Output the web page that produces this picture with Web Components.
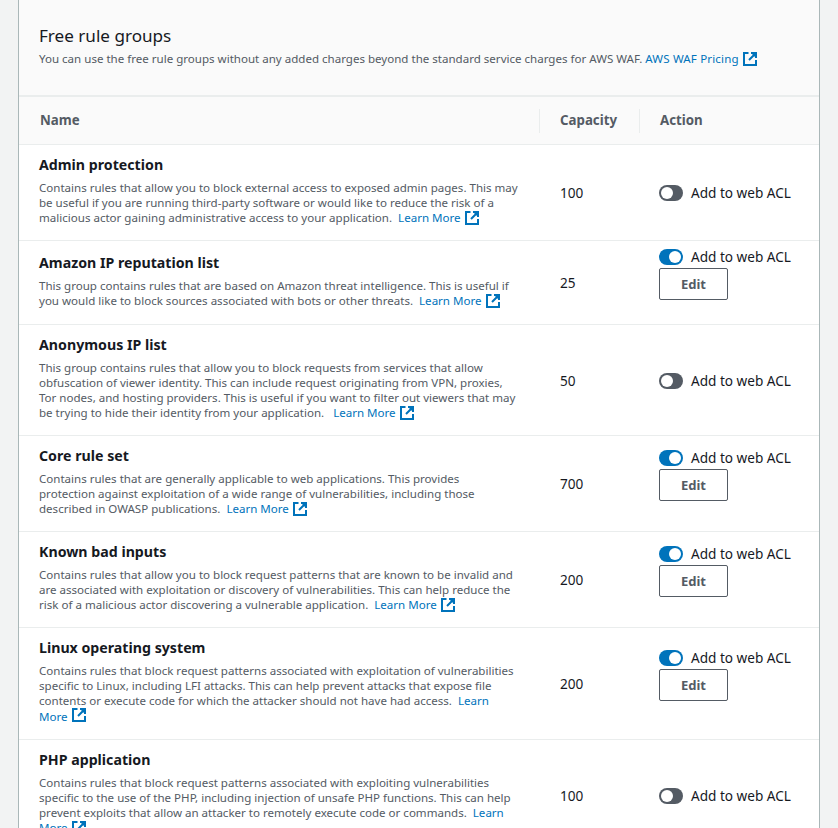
<!DOCTYPE html>
<html>
<head>
<meta charset="utf-8">
<title>Free rule groups</title>
<style>
  html, body { margin: 0; height: 828px; overflow: hidden; background: #f2f3f3; }
  body { font-family: "Noto Sans", sans-serif; color: #16191f; }
</style>
</head>
<body>
<rule-panel>
  <span slot="title">Free rule groups</span>
  <span slot="desc">You can use the free rule groups without any added charges beyond the standard service charges for AWS WAF. <ext-link style="letter-spacing:.15px;margin-left:0">AWS WAF Pricing</ext-link></span>

  <rule-row name="Admin protection" capacity="100">Contains rules that allow you to block external access to exposed admin pages. This may be useful if you are running third-party software or would like to reduce the risk of a malicious actor gaining administrative access to your application. <ext-link>Learn More</ext-link></rule-row>
  <rule-row name="Amazon IP reputation list" capacity="25" on>This group contains rules that are based on Amazon threat intelligence. This is useful if you would like to block sources associated with bots or other threats. <ext-link>Learn More</ext-link></rule-row>
  <rule-row name="Anonymous IP list" capacity="50">This group contains rules that allow you to block requests from services that allow obfuscation of viewer identity. This can include request originating from VPN, proxies, Tor nodes, and hosting providers. This is useful if you want to filter out viewers that may be trying to hide their identity from your application. <ext-link style="margin-left:6px">Learn More</ext-link></rule-row>
  <rule-row name="Core rule set" capacity="700" on>Contains rules that are generally applicable to web applications. This provides protection against exploitation of a wide range of vulnerabilities, including those described in OWASP publications. <ext-link>Learn More</ext-link></rule-row>
  <rule-row name="Known bad inputs" capacity="200" on>Contains rules that allow you to block request patterns that are known to be invalid and are associated with exploitation or discovery of vulnerabilities. This can help reduce the risk of a malicious actor discovering a vulnerable application. <ext-link>Learn More</ext-link></rule-row>
  <rule-row name="Linux operating system" capacity="200" on>Contains rules that block request patterns associated with exploitation of vulnerabilities specific to Linux, including LFI attacks. This can help prevent attacks that expose file contents or execute code for which the attacker should not have had access. <ext-link tall>Learn More</ext-link></rule-row>
  <rule-row name="PHP application" capacity="100">Contains rules that block request patterns associated with exploiting vulnerabilities specific to the use of the PHP, including injection of unsafe PHP functions. This can help prevent exploits that allow an attacker to remotely execute code or commands. <ext-link>Learn More</ext-link></rule-row>
</rule-panel>

<script>
class ExtLink extends HTMLElement {
  constructor() {
    super();
    this.attachShadow({ mode: "open" });
  }
  connectedCallback() {
    this.shadowRoot.innerHTML = `
      <style>
        :host { display: inline; color: #0073bb; margin-left: 3px; }
        svg { width: 14px; height: 14px; vertical-align: -3px; margin-left: 1px; }
        :host([tall]) svg { vertical-align: -1px; }
      </style>
      <slot></slot> <svg viewBox="0 0 14 14" fill="none" stroke="#0073bb" stroke-width="2">
        <path d="M5.5 1H1v12h12V8"/>
        <path d="M8 1h5v5M13 1L6 8"/>
        <path d="M9 2h3v3z" fill="#0073bb" stroke="none"/>
      </svg>`;
  }
}
customElements.define("ext-link", ExtLink);

class AclToggle extends HTMLElement {
  constructor() {
    super();
    this.attachShadow({ mode: "open" });
  }
  connectedCallback() {
    this.shadowRoot.innerHTML = `
      <style>
        :host { display: flex; align-items: center; gap: 8px; font-size: 13.6px; line-height: 16px; color: #16191f; }
        .track { width: 24px; height: 16px; border-radius: 8px; background: #545b64; position: relative; flex: none; }
        .knob { position: absolute; top: 2px; left: 2px; width: 12px; height: 12px; border-radius: 50%; background: #fff; }
        :host([on]) .track { background: #0073bb; }
        :host([on]) .knob { left: 10px; }
      </style>
      <span class="track"><span class="knob"></span></span>
      <span><slot></slot></span>`;
  }
}
customElements.define("acl-toggle", AclToggle);

class RuleRow extends HTMLElement {
  constructor() {
    super();
    this.attachShadow({ mode: "open" });
  }
  connectedCallback() {
    const name = this.getAttribute("name") || "";
    const capacity = this.getAttribute("capacity") || "";
    const on = this.hasAttribute("on");
    this.shadowRoot.innerHTML = `
      <style>
        :host { display: grid; grid-template-columns: 520px 100px 1fr; align-items: center; border-bottom: 1px solid #eaeded; background: #fff; }
        .name { padding: 9px 20.7px 15px 20px; }
        h3 { margin: 0 0 4px; font-size: 14.2px; line-height: 22px; font-weight: 700; color: #16191f; }
        p { margin: 0; font-size: 11.55px; line-height: 15px; color: #545b64; }
        .cap { padding-left: 21px; font-size: 13.6px; color: #16191f; }
        .act { padding-left: 20px; padding-top: 1px; }
        .act.on { padding-top: 8px; padding-bottom: 24px; }
        button { display: block; margin-top: 3px; width: 69px; height: 32px; padding: 0; background: #fff; border: 1px solid #545b64; border-radius: 2px; font: 700 13px "Noto Sans", sans-serif; color: #545b64; }
      </style>
      <div class="name"><h3>${name}</h3><p><slot></slot></p></div>
      <div class="cap">${capacity}</div>
      <div class="act ${on ? "on" : ""}">
        <acl-toggle ${on ? "on" : ""}>Add to web ACL</acl-toggle>
        ${on ? "<button>Edit</button>" : ""}
      </div>`;
  }
}
customElements.define("rule-row", RuleRow);

class RulePanel extends HTMLElement {
  constructor() {
    super();
    this.attachShadow({ mode: "open" });
  }
  connectedCallback() {
    this.shadowRoot.innerHTML = `
      <style>
        :host { display: block; width: 800px; margin-left: 18px; border-left: 1px solid #aab7b8; border-right: 1px solid #aab7b8; background: #fff; }
        header { height: 97px; box-sizing: border-box; padding: 23px 20px 0; background: #fafafa; border-bottom: 2px solid #eaeded; }
        h2 { margin: 0; font-size: 17.1px; line-height: 26px; font-weight: 400; color: #16191f; }
        .desc { margin-top: 1px; font-size: 11.55px; line-height: 18px; color: #545b64; }
        .cols { display: grid; grid-template-columns: 520px 100px 1fr; height: 48px; box-sizing: border-box; align-items: center; background: #fafafa; border-bottom: 1px solid #eaeded; font-size: 13.3px; font-weight: 700; color: #545b64; }
        .cols div { height: 24px; line-height: 22px; padding-left: 21px; }
        .cols div + div { border-left: 1px solid #eaeded; padding-left: 20px; }
      </style>
      <header>
        <h2><slot name="title"></slot></h2>
        <div class="desc"><slot name="desc"></slot></div>
      </header>
      <div class="cols"><div>Name</div><div>Capacity</div><div>Action</div></div>
      <slot></slot>`;
  }
}
customElements.define("rule-panel", RulePanel);
</script>
</body>
</html>
